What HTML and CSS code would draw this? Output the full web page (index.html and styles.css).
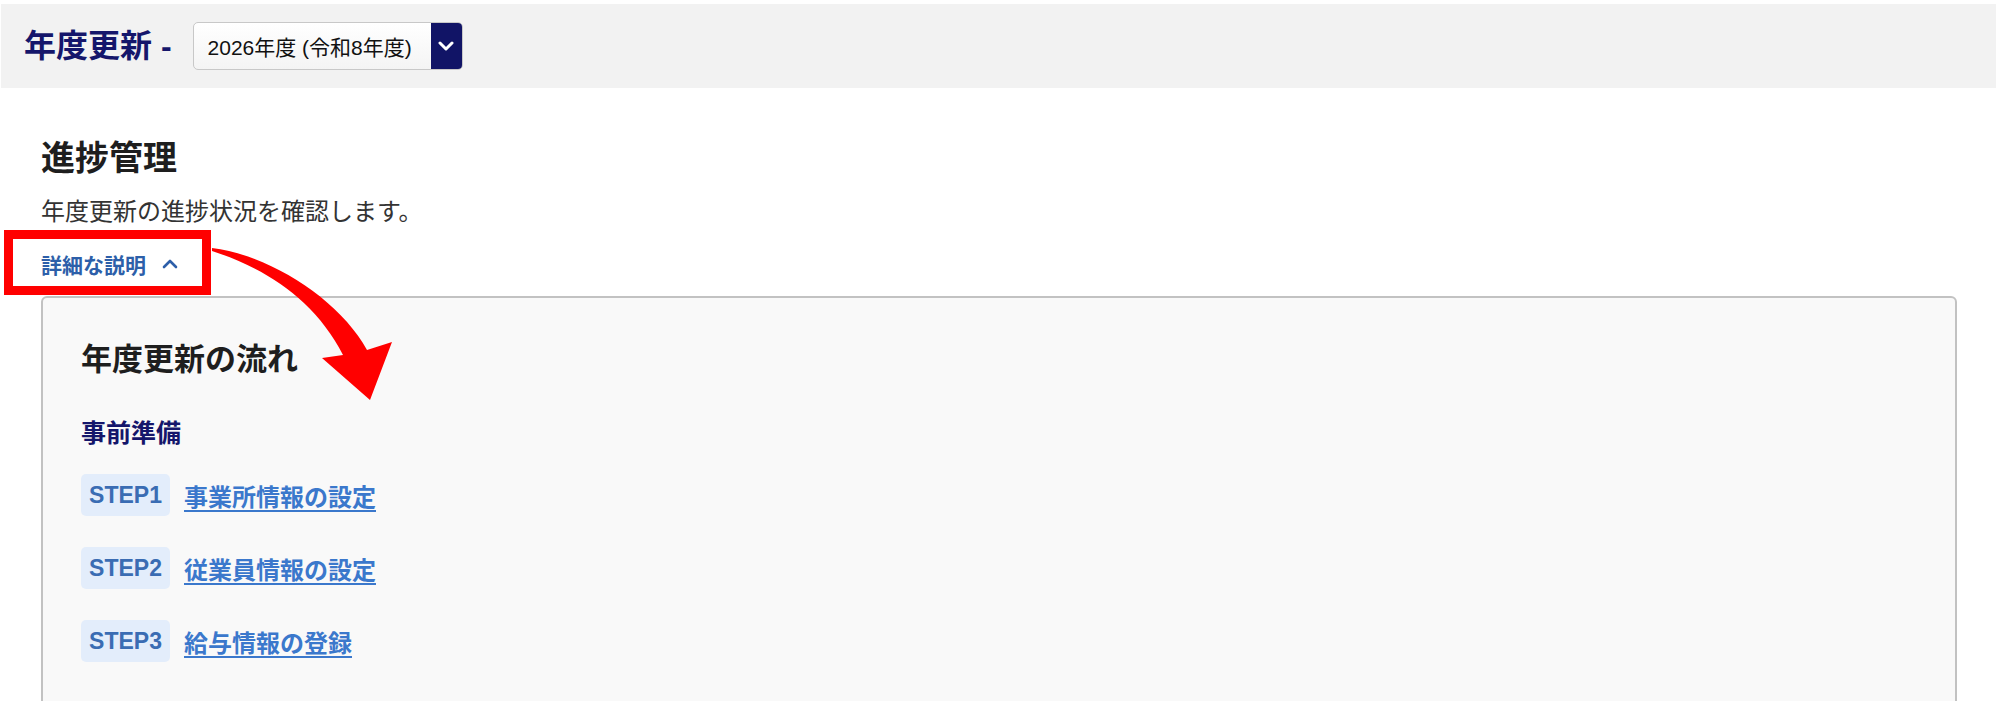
FILE: index.html
```html
<!DOCTYPE html>
<html lang="ja">
<head>
<meta charset="utf-8">
<link rel="stylesheet" href="styles.css">
</head>
<body>
<div class="page">
  <header class="topbar">
    <h1 class="topbar-title">年度更新 -</h1>
    <div class="select">
      <span class="select-value">2026年度 (令和8年度)</span>
      <span class="select-btn">
        <svg width="16" height="10" viewBox="0 0 16 10"><path d="M2 2 L8 8 L14 2" fill="none" stroke="#fff" stroke-width="3" stroke-linecap="round" stroke-linejoin="round"/></svg>
      </span>
    </div>
  </header>

  <main class="content">
    <h2 class="page-title">進捗管理</h2>
    <p class="page-desc">年度更新の進捗状況を確認します。</p>
    <div class="toggle">
      <span>詳細な説明</span>
      <svg width="16" height="10" viewBox="0 0 16 10"><path d="M2 8 L8 2 L14 8" fill="none" stroke="#2d5fa9" stroke-width="2.6" stroke-linecap="round" stroke-linejoin="round"/></svg>
    </div>

    <section class="card">
      <h3 class="card-title">年度更新の流れ</h3>
      <h4 class="card-sub">事前準備</h4>
      <ul class="steps">
        <li class="step"><span class="badge">STEP1</span><a class="step-link" href="#">事業所情報の設定</a></li>
        <li class="step"><span class="badge">STEP2</span><a class="step-link" href="#">従業員情報の設定</a></li>
        <li class="step"><span class="badge">STEP3</span><a class="step-link" href="#">給与情報の登録</a></li>
      </ul>
    </section>
  </main>

  <svg class="annotation" width="2000" height="701" viewBox="0 0 2000 701">
    <rect x="8.5" y="234.5" width="198" height="56" fill="none" stroke="#ff0000" stroke-width="9"/>
    <path d="M212,248 C270,255 340,300 367,350 L392,342 L370,400 L322,358 L343,355 C315,300 265,268 212,251 Z" fill="#ff0000"/>
  </svg>
</div>
</body>
</html>
```

FILE: styles.css
```css
* { box-sizing: border-box; }

html, body {
  margin: 0;
  padding: 0;
  background: #ffffff;
  font-family: "Liberation Sans", "Noto Sans CJK JP", sans-serif;
  color: #222222;
}

.page {
  position: relative;
  width: 2000px;
  height: 701px;
  overflow: hidden;
}

.topbar {
  margin: 4px 4px 0 1px;
  height: 84px;
  background: #f2f2f2;
  display: flex;
  align-items: center;
  padding-left: 23px;
  gap: 21px;
}

.topbar-title {
  margin: 0;
  font-size: 32px;
  line-height: 40px;
  font-weight: 700;
  color: #15166b;
}

.select {
  display: flex;
  align-items: stretch;
  height: 48px;
  width: 270px;
  border: 1px solid #c8c8c8;
  border-radius: 5px;
  background: linear-gradient(#ffffff, #f4f4f4);
  overflow: hidden;
}

.select-value {
  flex: 1;
  display: flex;
  align-items: center;
  padding-left: 14px;
  font-size: 21px;
  color: #111111;
}

.select-btn {
  width: 31px;
  background: #111466;
  display: flex;
  align-items: center;
  justify-content: center;
}

.content {
  padding-left: 41px;
  padding-right: 43px;
}

.page-title {
  margin: 50px 0 0;
  font-size: 34px;
  line-height: 40px;
  font-weight: 700;
  color: #1e1e1e;
}

.page-desc {
  margin: 19px 0 0;
  font-size: 24px;
  line-height: 30px;
  color: #333333;
}

.toggle {
  margin-top: 23px;
  height: 28px;
  display: flex;
  align-items: center;
  gap: 16px;
  font-size: 21px;
  font-weight: 700;
  color: #2d5fa9;
}

.card {
  margin-top: 18px;
  border: 2px solid #c2c2c2;
  border-radius: 6px;
  background: #f9f9f9;
  padding: 42px 38px 60px;
  min-height: 420px;
}

.card-title {
  margin: 0;
  font-size: 31px;
  line-height: 40px;
  font-weight: 700;
  color: #1e1e1e;
}

.card-sub {
  margin: 37px 0 0;
  font-size: 25px;
  line-height: 32px;
  font-weight: 700;
  color: #15166b;
}

.steps {
  list-style: none;
  margin: 25px 0 0;
  padding: 0;
  display: flex;
  flex-direction: column;
  gap: 31px;
}

.step {
  display: flex;
  align-items: center;
  gap: 14px;
}

.badge {
  width: 89px;
  height: 42px;
  border-radius: 5px;
  background: #e3edfb;
  color: #3a6cb3;
  font-size: 23px;
  font-weight: 700;
  display: flex;
  align-items: center;
  justify-content: center;
}

.step-link {
  font-size: 24px;
  font-weight: 700;
  color: #3b78cc;
  text-decoration: underline;
  text-underline-offset: 4px;
  text-decoration-thickness: 2px;
}

.annotation {
  position: absolute;
  left: 0;
  top: 0;
  pointer-events: none;
}
```
